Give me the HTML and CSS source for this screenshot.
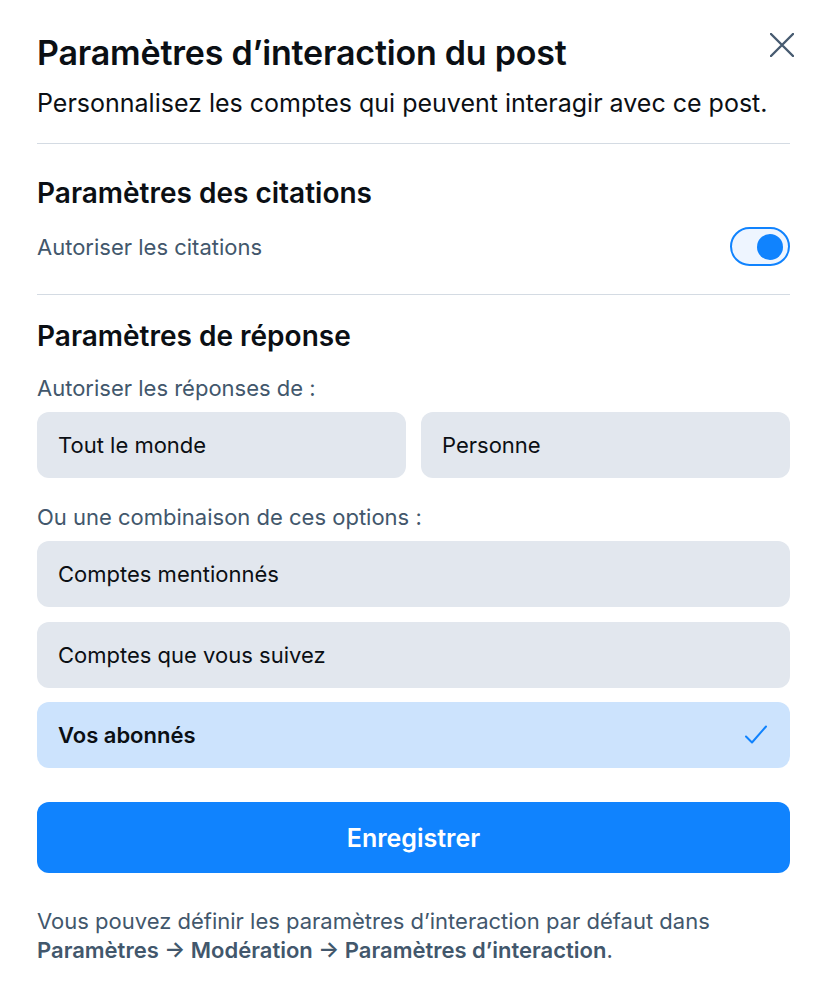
FILE: index.html
```html
<!DOCTYPE html>
<html lang="fr">
<head>
<meta charset="utf-8">
<title>Paramètres d’interaction du post</title>
<link rel="stylesheet" href="styles.css">
</head>
<body>
<div class="dialog">
  <header class="head">
    <div class="title-row">
      <h1 class="title">Paramètres d’interaction du post</h1>
      <button class="close" aria-label="Fermer">
        <svg viewBox="0 0 24 24" width="24" height="24"><path d="M1 1 L23 23 M23 1 L1 23" stroke="#475b70" stroke-width="2.4" stroke-linecap="round" fill="none"/></svg>
      </button>
    </div>
    <p class="subtitle">Personnalisez les comptes qui peuvent interagir avec ce post.</p>
  </header>
  <hr class="divider">
  <section class="section">
    <h2 class="section-title">Paramètres des citations</h2>
    <div class="toggle-row">
      <span class="label">Autoriser les citations</span>
      <span class="toggle"><span class="knob"></span></span>
    </div>
  </section>
  <hr class="divider">
  <section class="section replies">
    <h2 class="section-title">Paramètres de réponse</h2>
    <p class="label label-a">Autoriser les réponses de :</p>
    <div class="pair">
      <div class="opt">Tout le monde</div>
      <div class="opt">Personne</div>
    </div>
    <p class="label label-b">Ou une combinaison de ces options :</p>
    <div class="list">
      <div class="opt">Comptes mentionnés</div>
      <div class="opt">Comptes que vous suivez</div>
      <div class="opt selected">Vos abonnés
        <svg class="check" viewBox="0 0 24 24" width="24" height="24"><path d="M2 13.5 L8 19.5 L22 3.5" stroke="#1083fe" stroke-width="2" stroke-linecap="round" stroke-linejoin="round" fill="none"/></svg>
      </div>
    </div>
  </section>
  <button class="save">Enregistrer</button>
  <p class="footnote">Vous pouvez définir les paramètres d’interaction par défaut dans <b>Paramètres → Modération → Paramètres d’interaction</b>.</p>
</div>
</body>
</html>
```
FILE: styles.css
```css
* { box-sizing: border-box; }
html, body { margin: 0; padding: 0; background: #ffffff; }
body {
  font-family: Inter, "Noto Sans", "Liberation Sans", sans-serif;
  color: #0b0f14;
}
.dialog {
  padding: 34px 36px 30px 37px;
}
.title-row {
  display: flex;
  justify-content: space-between;
  align-items: flex-start;
}
.title {
  margin: 0;
  font-size: 34px;
  line-height: 38px;
  font-weight: 600;
  letter-spacing: -0.2px;
}
.subtitle {
  margin: 15px 0 0;
  font-size: 25px;
  line-height: 32px;
  font-weight: 400;
  white-space: nowrap;
}
.close {
  border: 0;
  background: none;
  padding: 0;
  margin: -4px -7px 0 0;
  width: 30px;
  height: 30px;
  display: flex;
  align-items: center;
  justify-content: center;
}
.divider {
  border: 0;
  border-top: 1.5px solid #d4dbe3;
  margin: 24px 0 0;
}
.section { padding-top: 32px; }
.replies { padding-top: 24px; }
.section-title {
  margin: 0;
  font-size: 28px;
  line-height: 34px;
  font-weight: 600;
}
.label {
  font-size: 22px;
  line-height: 28px;
  color: #42576c;
  margin: 0;
}
.toggle-row {
  margin-top: 17px;
  margin-bottom: 28px;
  display: flex;
  align-items: center;
  justify-content: space-between;
}
.toggle {
  width: 60px;
  height: 39px;
  border: 2px solid #1083fe;
  border-radius: 20px;
  background: #eef5ff;
  display: flex;
  align-items: center;
  justify-content: flex-end;
  padding-right: 5px;
}
.knob {
  width: 26px;
  height: 26px;
  border-radius: 50%;
  background: #1083fe;
}
.label-a { margin-top: 21px; }
.label-b { margin-top: 25px; }
.pair {
  margin-top: 10px;
  display: grid;
  grid-template-columns: 1fr 1fr;
  gap: 15px;
}
.list {
  margin-top: 10px;
  display: flex;
  flex-direction: column;
  gap: 14.5px;
}
.opt {
  height: 66px;
  border-radius: 12px;
  background: #e2e7ee;
  display: flex;
  align-items: center;
  justify-content: space-between;
  padding: 0 21px;
  font-size: 22px;
  font-weight: 400;
}
.opt.selected {
  background: #cce3fd;
  font-weight: 600;
}
.check { margin-right: 1px; }
.save {
  display: block;
  width: 100%;
  margin-top: 34px;
  height: 71px;
  border: 0;
  border-radius: 12px;
  background: #1083fe;
  color: #ffffff;
  font-family: inherit;
  font-size: 25px;
  font-weight: 600;
}
.footnote {
  margin: 34px 0 0;
  font-size: 22px;
  line-height: 29px;
  color: #42576c;
}
.footnote b { font-weight: 600; white-space: nowrap; }
```
